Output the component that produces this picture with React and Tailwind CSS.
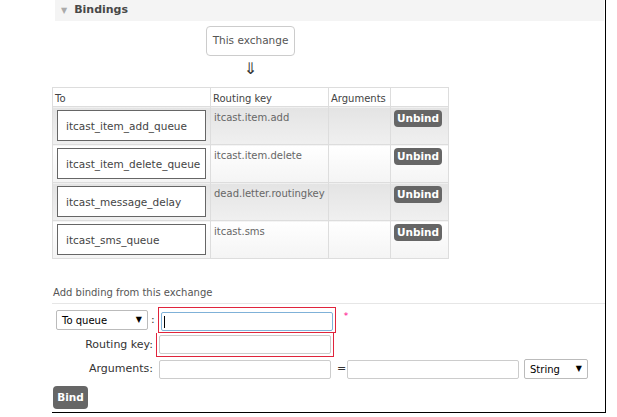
import React from "react";

const rows = [
  { to: "itcast_item_add_queue", key: "itcast.item.add", alt: true },
  { to: "itcast_item_delete_queue", key: "itcast.item.delete", alt: false },
  { to: "itcast_message_delay", key: "dead.letter.routingkey", alt: true },
  { to: "itcast_sms_queue", key: "itcast.sms", alt: false },
];

function Caret() {
  return <span className="text-[8px] text-black ml-auto">▼</span>;
}

export default function App() {
  return (
    <div className="w-[617px] h-[417px] bg-white overflow-hidden font-['DejaVu_Sans',Verdana,sans-serif] text-[11px] text-[#444]">
      <div className="ml-[52px] w-[554px] h-[413px] border-r border-b border-black flex flex-col">
        {/* section header */}
        <div className="shrink-0 ml-[3px] mr-[1px] h-[21px] bg-[#f4f4f4] flex items-center pl-[6px] gap-[7px]">
          <span className="text-[8px] text-[#aaa]">▼</span>
          <span className="font-bold text-[11px] text-[#484848]">Bindings</span>
        </div>

        {/* source exchange */}
        <div className="shrink-0 ml-[154px] mt-[5px] w-[89px] h-[30px] border border-[#ccc] rounded-[4px] flex items-center justify-center text-[#555] text-[10.5px]">
          This exchange
        </div>
        <div className="shrink-0 ml-[154px] w-[89px] h-[26px] flex items-center justify-center text-[16px] text-[#333] leading-none">
          ⇓
        </div>
        <div className="shrink-0 h-[5px]" />

        {/* bindings table */}
        <table className="shrink-0 w-[397px] border-collapse border border-[#ddd] text-[10px]">
          <thead>
            <tr className="h-[18px] text-[#444]">
              <th className="w-[158px] text-left font-normal px-[2px] pt-[3px] border-r border-[#ddd]">To</th>
              <th className="w-[118px] text-left font-normal px-[2px] pt-[3px] border-r border-[#ddd]">Routing key</th>
              <th className="w-[62px] text-left font-normal px-[2px] pt-[3px] border-r border-[#ddd]">Arguments</th>
              <th className="font-normal"></th>
            </tr>
          </thead>
          <tbody>
            {rows.map((r) => (
              <tr
                key={r.to}
                className={`h-[37px] border-t border-[#ddd] ${r.alt ? "bg-gradient-to-b from-[#e4e4e4] to-[#f0f0f0]" : "bg-gradient-to-b from-[#ffffff] to-[#f4f4f4]"}`}
              >
                <td className="px-[4px] py-[3px] align-top border-r border-[#ddd]">
                  <div className="w-[149px] h-[31px] border border-[#666] bg-white flex items-center pl-[8px] pt-[3px] text-[#444] text-[10.5px]">
                    {r.to}
                  </div>
                </td>
                <td className="px-[3px] pt-[3px] align-top border-r border-[#ddd] text-[#666] text-[10px]">
                  {r.key}
                </td>
                <td className="border-r border-[#ddd]"></td>
                <td className="align-top pt-[3px] pl-[3px]">
                  <div className="w-[48px] h-[17px] rounded-[4px] bg-[#666] text-white font-bold text-[10.5px] flex items-center justify-center">
                    Unbind
                  </div>
                </td>
              </tr>
            ))}
          </tbody>
        </table>

        {/* add binding form */}
        <div className="shrink-0 mt-[26px] pl-[1px] pb-[3px] border-b border-[#e6e6e6] text-[#555] text-[10px]">
          Add binding from this exchange
        </div>

        <div className="shrink-0 flex items-center mt-[3px]">
          <div className="ml-[4px] w-[92px] h-[20px] border border-[#bbb] rounded-[2px] flex items-center px-[5px] text-[10px] text-black">
            To queue
            <Caret />
          </div>
          <span className="ml-[3px] text-[#333]">:</span>
          <div className="ml-[3px] border border-[#e0243c] px-[2px] pt-[4px] pb-[1px] flex flex-col">
            <div className="w-[172px] h-[19px] border border-[#7fb1d8] rounded-[2px] bg-white flex items-center pl-[2px]">
              <span className="w-[1px] h-[12px] bg-black" />
            </div>
          </div>
          <span className="ml-[8px] text-[#f08] text-[9px] -mt-[6px]">*</span>
        </div>

        <div className="shrink-0 flex items-center">
          <span className="w-[101px] text-right text-[#333]">Routing key:</span>
          <div className="ml-[3px] border border-t-0 border-[#e0243c] px-[2px] pt-[2px] pb-[2px]">
            <div className="w-[172px] h-[19px] border border-[#ccc] rounded-[2px] bg-white" />
          </div>
        </div>

        <div className="shrink-0 flex items-center mt-[2px]">
          <span className="w-[101px] text-right text-[#333]">Arguments:</span>
          <div className="ml-[6px] w-[172px] h-[19px] border border-[#ccc] rounded-[2px] bg-white" />
          <span className="ml-[6px] w-[10px] text-[#333]">=</span>
          <div className="w-[172px] h-[19px] border border-[#ccc] rounded-[2px] bg-white" />
          <div className="ml-[5px] w-[64px] h-[20px] border border-[#bbb] rounded-[2px] flex items-center px-[5px] text-[10px] text-black">
            String
            <Caret />
          </div>
        </div>

        <div className="shrink-0 mt-[7px] ml-[1px] w-[35px] h-[23px] rounded-[4px] bg-[#666] text-white font-bold text-[10.5px] flex items-center justify-center">
          Bind
        </div>
      </div>
    </div>
  );
}
